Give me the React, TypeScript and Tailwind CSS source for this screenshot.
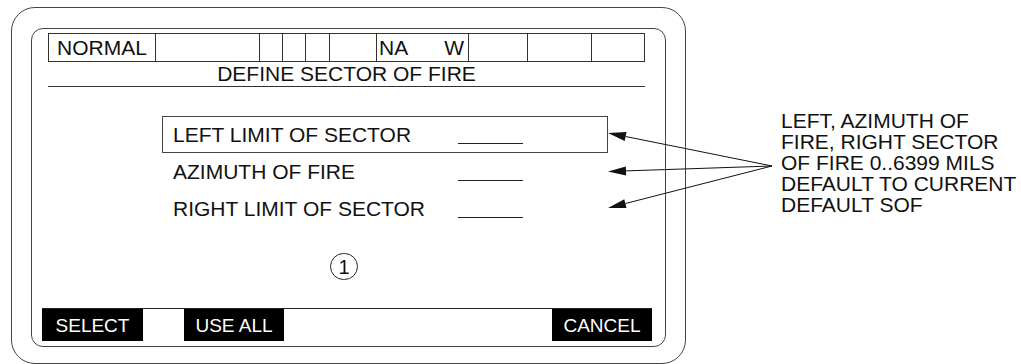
// Define sector of fire – display mock with callout

const cells = [
  { w: "w-[106px]", text: "NORMAL" },
  { w: "w-[104px]" },
  { w: "w-[23px]" },
  { w: "w-[23px]" },
  { w: "w-[24px]" },
  { w: "w-[47px]" },
  { w: "w-[92px]", na: true },
  { w: "w-[59px]" },
  { w: "w-[64px]" },
  { w: "flex-1" },
];

const rows = [
  { label: "LEFT LIMIT OF SECTOR", selected: true },
  { label: "AZIMUTH OF FIRE" },
  { label: "RIGHT LIMIT OF SECTOR" },
];

function StatusBar() {
  return (
    <div className="ml-[16px] mt-[4px] flex h-[29px] w-[597px] border border-[#333]">
      {cells.map((c, i) => (
        <div
          key={i}
          className={`${c.w} flex h-full items-center ${i > 0 ? "border-l border-[#333]" : ""} ${
            c.text ? "pl-[8px]" : ""
          }`}
        >
          {c.text && <span className="leading-none">{c.text}</span>}
          {c.na && (
            <div className="flex w-full justify-between pl-[2px] pr-[4px] leading-none">
              <span>NA</span>
              <span>W</span>
            </div>
          )}
        </div>
      ))}
    </div>
  );
}

function Callout() {
  return (
    <svg className="pointer-events-none absolute inset-0" width="1021" height="364">
      <g stroke="#111" strokeWidth="1">
        <line x1="772" y1="166" x2="625.6" y2="136.5" />
        <line x1="772" y1="166" x2="626" y2="170.9" />
        <line x1="772" y1="166" x2="625.4" y2="203.5" />
      </g>
      <g fill="#111">
        <polygon points="608,133 624.7,140.9 626.5,132.1" />
        <polygon points="608,171.5 626.15,175.4 625.85,166.4" />
        <polygon points="608,208 626.5,207.9 624.3,199.2" />
      </g>
    </svg>
  );
}

export default function App() {
  return (
    <div className="relative flex h-[364px] w-[1021px] overflow-hidden bg-white font-['Liberation_Sans',Arial,sans-serif] text-[21px] text-[#111]">
      {/* outer bezel */}
      <div className="ml-[11px] mt-[7px] h-[357px] w-[675px] shrink-0 rounded-[24px] border border-[#444]">
        {/* screen */}
        <div className="ml-[19px] mt-[20px] flex h-[319px] w-[635px] flex-col rounded-[12px] border border-[#444] pb-[5px]">
          <StatusBar />
          <div className="ml-[16px] h-[25px] w-[597px] border-b border-[#333] text-center leading-[24px]">
            DEFINE SECTOR OF FIRE
          </div>

          <div className="ml-[130px] mt-[29px] flex w-[446px] flex-col">
            {rows.map((r) => (
              <div
                key={r.label}
                className={`flex h-[37px] items-center border pl-[10px] ${
                  r.selected ? "border-[#444]" : "border-transparent"
                }`}
              >
                <span className="w-[285px] leading-none">{r.label}</span>
                <span className="h-[27px] w-[65px] self-start border-b border-[#222]" />
              </div>
            ))}
          </div>

          <div className="ml-[298px] mt-[26px] flex h-[27px] w-[28px] items-center justify-center rounded-full border border-[#222] text-[20px] leading-none">
            1
          </div>

          <div className="ml-[10px] mt-auto flex h-[33px] w-[610px] justify-between border-t border-[#222] text-[19px] text-white">
            <div className="flex gap-[41px]">
              <div className="flex h-[32px] w-[101px] items-center justify-center bg-black leading-none">SELECT</div>
              <div className="flex h-[32px] w-[100px] items-center justify-center bg-black leading-none">USE ALL</div>
            </div>
            <div className="flex h-[32px] w-[100px] items-center justify-center bg-black leading-none">CANCEL</div>
          </div>
        </div>
      </div>

      {/* annotation */}
      <div className="ml-[95px] mt-[110px] whitespace-nowrap leading-[21px]">
        <div>LEFT, AZIMUTH OF</div>
        <div>FIRE, RIGHT SECTOR</div>
        <div>OF FIRE 0..6399 MILS</div>
        <div>DEFAULT TO CURRENT</div>
        <div>DEFAULT SOF</div>
      </div>

      <Callout />
    </div>
  );
}
